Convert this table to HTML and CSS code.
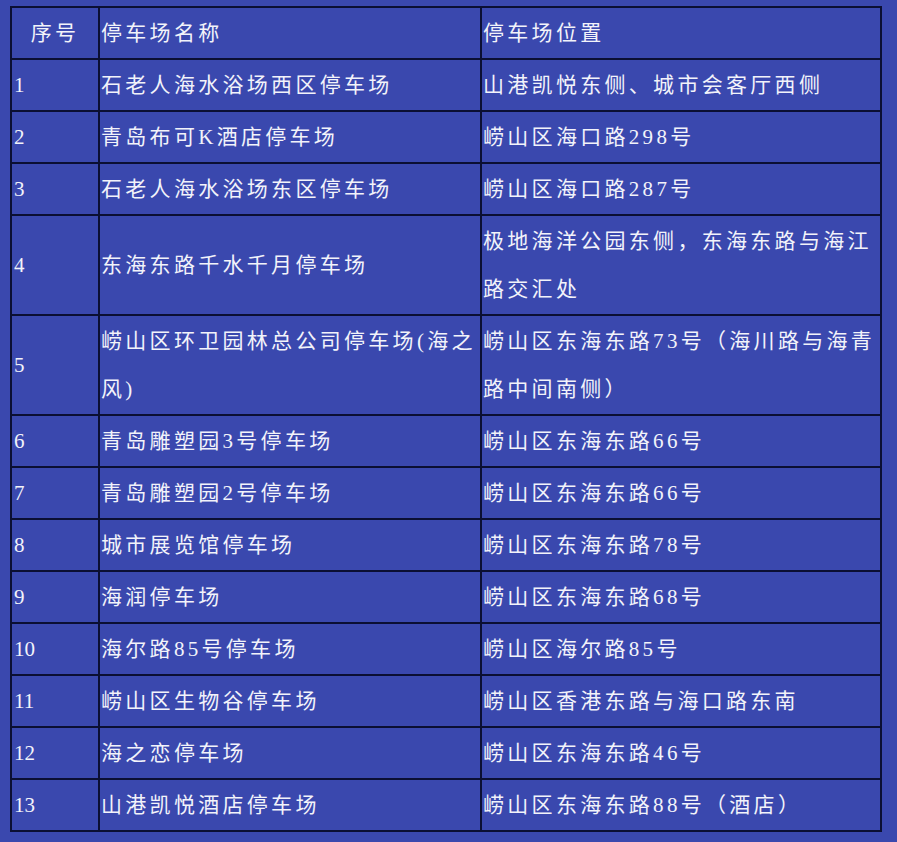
FILE: index.html
```html
<!DOCTYPE html>
<html lang="zh">
<head>
<meta charset="utf-8">
<title>停车场</title>
<link rel="stylesheet" href="styles.css">
</head>
<body>
<table class="park">
  <colgroup><col class="c1"><col class="c2"><col class="c3"></colgroup>
  <thead>
    <tr><th class="num-h">序号</th><th>停车场名称</th><th>停车场位置</th></tr>
  </thead>
  <tbody>
    <tr><td class="num">1</td><td>石老人海水浴场西区停车场</td><td>山港凯悦东侧、城市会客厅西侧</td></tr>
    <tr><td class="num">2</td><td>青岛布可K酒店停车场</td><td>崂山区海口路298号</td></tr>
    <tr><td class="num">3</td><td>石老人海水浴场东区停车场</td><td>崂山区海口路287号</td></tr>
    <tr><td class="num">4</td><td>东海东路千水千月停车场</td><td>极地海洋公园东侧，东海东路与海江路交汇处</td></tr>
    <tr><td class="num">5</td><td>崂山区环卫园林总公司停车场(海之风)</td><td>崂山区东海东路73号（海川路与海青路中间南侧）</td></tr>
    <tr><td class="num">6</td><td>青岛雕塑园3号停车场</td><td>崂山区东海东路66号</td></tr>
    <tr><td class="num">7</td><td>青岛雕塑园2号停车场</td><td>崂山区东海东路66号</td></tr>
    <tr><td class="num">8</td><td>城市展览馆停车场</td><td>崂山区东海东路78号</td></tr>
    <tr><td class="num">9</td><td>海润停车场</td><td>崂山区东海东路68号</td></tr>
    <tr><td class="num">10</td><td>海尔路85号停车场</td><td>崂山区海尔路85号</td></tr>
    <tr><td class="num">11</td><td>崂山区生物谷停车场</td><td>崂山区香港东路与海口路东南</td></tr>
    <tr><td class="num">12</td><td>海之恋停车场</td><td>崂山区东海东路46号</td></tr>
    <tr><td class="num">13</td><td>山港凯悦酒店停车场</td><td>崂山区东海东路88号（酒店）</td></tr>
  </tbody>
</table>
</body>
</html>
```
FILE: styles.css
```css
html, body {
  margin: 0;
  padding: 0;
  background: #3a48ae;
}
body {
  padding: 6px 0 0 10px;
  font-family: "Liberation Serif", "Noto Sans CJK SC", serif;
  color: #f2f3fa;
}
.park {
  border-collapse: collapse;
  table-layout: fixed;
  width: 870px;
}
.c1 { width: 88px; }
.c2 { width: 382px; }
.c3 { width: 400px; }
.park th,
.park td {
  border: 2px solid #0b0f33;
  padding: 1px 0 1px 1px;
  font-size: 21px;
  font-weight: normal;
  line-height: 48px;
  letter-spacing: 3.3px;
  text-align: left;
  vertical-align: middle;
}
.park th.num-h {
  text-align: center;
  padding-left: 0;
}
.park td.num {
  padding-left: 2px;
  letter-spacing: 0;
}
```
